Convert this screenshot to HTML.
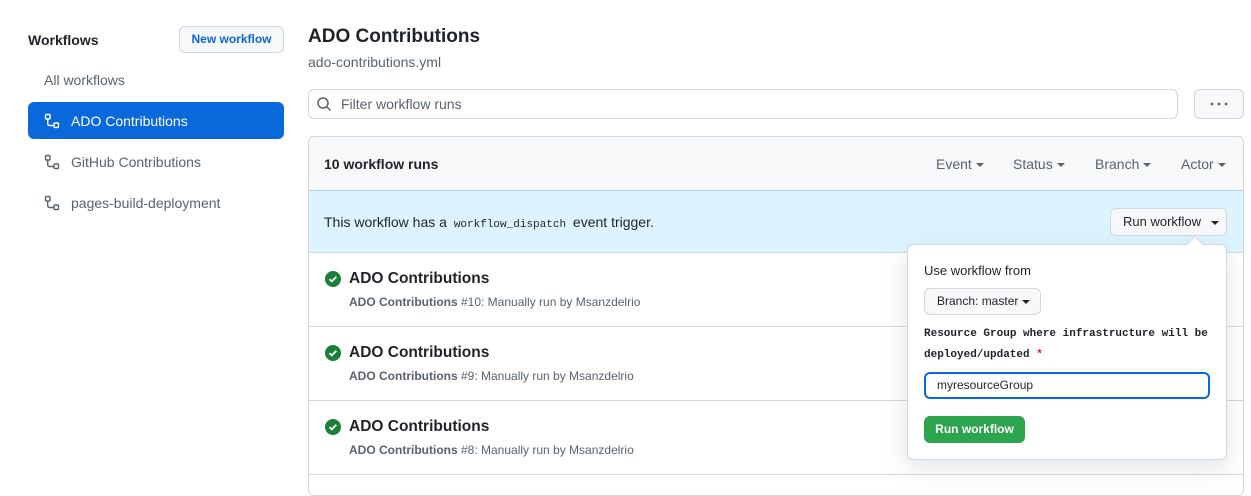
<!DOCTYPE html>
<html><head><meta charset="utf-8"><style>
*{box-sizing:border-box;margin:0;padding:0}
body{width:1251px;height:487px;overflow:hidden;background:#fff;font-family:"Liberation Sans",sans-serif;color:#1f2328;position:relative;font-size:14px}
.a{position:absolute;white-space:nowrap}
.btn{position:absolute;background:#f6f8fa;border:1px solid #d0d7de;border-radius:6px}
.car{display:inline-block;width:0;height:0;border-left:4px solid transparent;border-right:4px solid transparent;border-top:4px solid currentColor;vertical-align:middle;margin-left:4px}
.mono{font-family:"Liberation Mono",monospace}
</style></head><body>
<div class="a" style="left:28px;top:32px;font-weight:bold;font-size:14px">Workflows</div>
<div class="btn" style="left:179px;top:26px;width:105px;height:27px;color:#0969da;font-size:12px;font-weight:bold;text-align:center;line-height:25px">New workflow</div>
<div class="a" style="left:44px;top:72px;color:#59636e">All workflows</div>
<div class="a" style="left:28px;top:102px;width:256px;height:37px;background:#0969da;border-radius:6px"></div>
<svg class="a" style="left:44px;top:113px" width="16" height="16" viewBox="0 0 16 16" fill="none" stroke="#fff" stroke-width="1.4"><rect x="1.5" y="1.5" width="4.5" height="4.5" rx="1"/><rect x="10" y="10" width="4.5" height="4.5" rx="1"/><path d="M3.7 6v4.5q0 2 2 2H10"/></svg>
<div class="a" style="left:71px;top:113px;color:#fff">ADO Contributions</div>
<svg class="a" style="left:44px;top:154px" width="16" height="16" viewBox="0 0 16 16" fill="none" stroke="#59636e" stroke-width="1.4"><rect x="1.5" y="1.5" width="4.5" height="4.5" rx="1"/><rect x="10" y="10" width="4.5" height="4.5" rx="1"/><path d="M3.7 6v4.5q0 2 2 2H10"/></svg>
<div class="a" style="left:71px;top:154px;color:#59636e">GitHub Contributions</div>
<svg class="a" style="left:44px;top:195px" width="16" height="16" viewBox="0 0 16 16" fill="none" stroke="#59636e" stroke-width="1.4"><rect x="1.5" y="1.5" width="4.5" height="4.5" rx="1"/><rect x="10" y="10" width="4.5" height="4.5" rx="1"/><path d="M3.7 6v4.5q0 2 2 2H10"/></svg>
<div class="a" style="left:71px;top:195px;color:#59636e">pages-build-deployment</div>

<div class="a" style="left:308px;top:26px;font-size:19px;font-weight:bold">ADO Contributions</div>
<div class="a" style="left:308px;top:54px;color:#59636e">ado-contributions.yml</div>
<div class="a" style="left:308px;top:89px;width:870px;height:30px;border:1px solid #d0d7de;border-radius:6px"></div>
<svg class="a" style="left:316px;top:96px" width="16" height="16" viewBox="0 0 16 16" fill="none" stroke="#59636e" stroke-width="1.5"><circle cx="7" cy="7" r="5"/><path d="M10.6 10.6L14.5 14.5"/></svg>
<div class="a" style="left:341px;top:96px;color:#59636e">Filter workflow runs</div>
<div class="btn" style="left:1194px;top:89px;width:50px;height:30px"></div>
<svg class="a" style="left:1210px;top:102px" width="18" height="4"><circle cx="2" cy="2" r="1.4" fill="#59636e"/><circle cx="9" cy="2" r="1.4" fill="#59636e"/><circle cx="16" cy="2" r="1.4" fill="#59636e"/></svg>

<div class="a" style="left:308px;top:136px;width:936px;height:360px;border:1px solid #d0d7de;border-radius:6px;overflow:hidden">
 <div style="height:54px;background:#f6f8fa;border-bottom:1px solid #a8d3f5"></div>
 <div style="height:62px;background:#ddf4ff;border-bottom:1px solid #d0d7de"></div>
 <div style="height:74px;border-bottom:1px solid #d0d7de"></div>
 <div style="height:74px;border-bottom:1px solid #d0d7de"></div>
 <div style="height:74px;border-bottom:1px solid #d0d7de"></div>
</div>
<div class="a" style="left:324px;top:156px;font-weight:bold">10 workflow runs</div>
<div class="a" style="left:936px;top:156px;color:#59636e">Event<span class="car"></span></div>
<div class="a" style="left:1013px;top:156px;color:#59636e">Status<span class="car"></span></div>
<div class="a" style="left:1095px;top:156px;color:#59636e">Branch<span class="car"></span></div>
<div class="a" style="left:1181px;top:156px;color:#59636e">Actor<span class="car"></span></div>
<div class="a" style="left:324px;top:214px">This workflow has a <span class="mono" style="font-size:11px;padding:0 3px">workflow_dispatch</span> event trigger.</div>
<div class="btn" style="left:1110px;top:208px;width:117px;height:28px;font-size:13px;line-height:26px;padding-left:12px">Run workflow <span class="car" style="margin-left:6px"></span></div>

<svg class="a" style="left:325px;top:271px" width="16" height="16" viewBox="0 0 16 16"><circle cx="8" cy="8" r="8" fill="#1a7f37"/><path d="M4.5 8.2l2.3 2.2 4.5-4.6" stroke="#fff" stroke-width="1.8" fill="none"/></svg>
<div class="a" style="left:349px;top:270px;font-size:15.5px;font-weight:bold">ADO Contributions</div>
<div class="a" style="left:349px;top:295px;font-size:12px;color:#59636e"><b>ADO Contributions</b> #10: Manually run by Msanzdelrio</div>
<svg class="a" style="left:325px;top:345px" width="16" height="16" viewBox="0 0 16 16"><circle cx="8" cy="8" r="8" fill="#1a7f37"/><path d="M4.5 8.2l2.3 2.2 4.5-4.6" stroke="#fff" stroke-width="1.8" fill="none"/></svg>
<div class="a" style="left:349px;top:344px;font-size:15.5px;font-weight:bold">ADO Contributions</div>
<div class="a" style="left:349px;top:369px;font-size:12px;color:#59636e"><b>ADO Contributions</b> #9: Manually run by Msanzdelrio</div>
<svg class="a" style="left:325px;top:419px" width="16" height="16" viewBox="0 0 16 16"><circle cx="8" cy="8" r="8" fill="#1a7f37"/><path d="M4.5 8.2l2.3 2.2 4.5-4.6" stroke="#fff" stroke-width="1.8" fill="none"/></svg>
<div class="a" style="left:349px;top:418px;font-size:15.5px;font-weight:bold">ADO Contributions</div>
<div class="a" style="left:349px;top:443px;font-size:12px;color:#59636e"><b>ADO Contributions</b> #8: Manually run by Msanzdelrio</div>

<div class="a" style="left:907px;top:244px;width:320px;height:216px;background:#fff;border:1px solid #d0d7de;border-radius:6px;box-shadow:0 8px 24px rgba(140,149,159,.25)"></div>
<div class="a" style="left:1189px;top:238px;width:12px;height:12px;background:#fff;border-left:1px solid #d0d7de;border-top:1px solid #d0d7de;transform:rotate(45deg)"></div>
<div class="a" style="left:924px;top:263px;font-size:13px">Use workflow from</div>
<div class="btn" style="left:924px;top:288px;width:117px;height:27px;font-size:12px;line-height:25px;padding-left:12px">Branch: master<span class="car"></span></div>
<div class="a mono" style="left:924px;top:328px;font-size:11px;font-weight:bold;color:#1f2328">Resource Group where infrastructure will be</div>
<div class="a mono" style="left:924px;top:349px;font-size:11px;font-weight:bold">deployed/updated <span style="color:#cf222e">*</span></div>
<div class="a" style="left:924px;top:372px;width:286px;height:27px;border:2px solid #0969da;border-radius:6px;font-size:12px;line-height:23px;padding-left:11px">myresourceGroup</div>
<div class="a" style="left:924px;top:416px;width:101px;height:27px;background:#2da44e;border-radius:6px;color:#fff;font-size:12px;font-weight:bold;text-align:center;line-height:27px">Run workflow</div>
</body></html>
